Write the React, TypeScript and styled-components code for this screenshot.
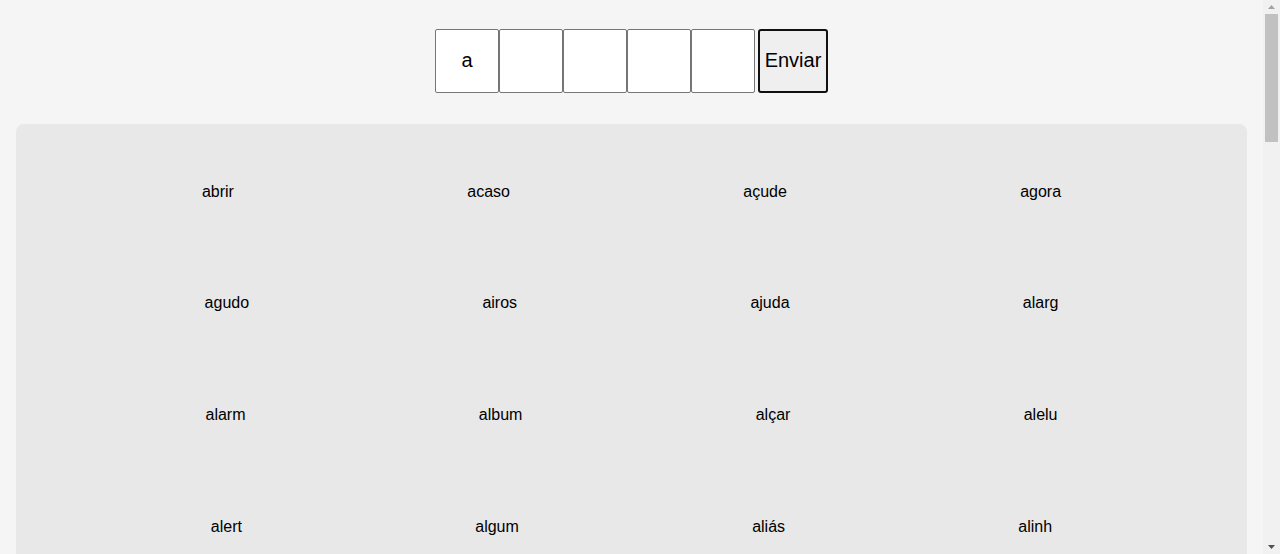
import React, { useState } from "react";
import styled, { createGlobalStyle } from "styled-components";

const GlobalStyle = createGlobalStyle`
  html, body {
    margin: 0;
    padding: 0;
    background: #f5f5f5;
    font-family: "Liberation Sans", Arial, sans-serif;
    color: #000;
    overflow: hidden;
  }
  * { box-sizing: border-box; }
`;

const Shell = styled.div`
  display: flex;
  height: 100vh;
  width: 100%;
`;

const Main = styled.main`
  flex: 1;
  min-width: 0;
  overflow-y: auto;
  scrollbar-width: none;
  &::-webkit-scrollbar { display: none; }
`;

const ScrollBar = styled.div`
  width: 17px;
  flex: none;
  display: flex;
  flex-direction: column;
  background: #f1f1f1;
`;

const ArrowButton = styled.div`
  height: 14px;
  flex: none;
  display: flex;
  justify-content: center;
  align-items: center;
`;

const Track = styled.div`
  flex: 1;
  padding: 0 2px;
`;

const Thumb = styled.div`
  height: 128px;
  background: #c1c1c1;
`;

const Page = styled.div`
  padding: 29px 16px 16px;
`;

const Form = styled.form`
  display: flex;
  justify-content: center;
  align-items: stretch;
  margin: 0 0 31px;
`;

const LetterBox = styled.input`
  width: 64px;
  height: 64px;
  margin: 0;
  padding: 0 0 2px;
  border: 1px solid #767676;
  border-radius: 2px;
  background: #fff;
  text-align: center;
  font-family: "Liberation Sans", Arial, sans-serif;
  font-size: 20px;
  color: #000;
  outline: none;
`;

const SubmitButton = styled.button`
  width: 70px;
  height: 64px;
  margin-left: 3px;
  padding: 0 0 2px;
  border: 2px solid #101010;
  border-radius: 3px;
  background: #efefef;
  font-family: "Liberation Sans", Arial, sans-serif;
  font-size: 20px;
  color: #000;
  cursor: pointer;
`;

const Panel = styled.div`
  background: #e8e8e8;
  border-radius: 8px;
  padding: 12px 16px 11px;
`;

const Row = styled.div`
  display: flex;
  justify-content: center;
  align-items: center;
  gap: 233.3px;
  height: 111.67px;
`;

const Word = styled.span`
  font-size: 16px;
  line-height: 18px;
`;

const WORDS = [
  "abrir", "acaso", "açude", "agora",
  "agudo", "airos", "ajuda", "alarg",
  "alarm", "album", "alçar", "alelu",
  "alert", "algum", "aliás", "alinh",
  "aliso", "almas", "almej", "almoç",
  "alojo", "altar", "altos", "aluno",
  "amado", "amant", "ambos", "ameno",
  "amigo", "amora", "ampla", "anexo",
  "anjos", "antes", "anual", "apelo",
  "apoio", "aquém", "arame", "areia",
  "arena", "armas", "aroma", "arroz",
  "artes", "asilo", "assar", "assim",
  "astro", "atlas", "atrás", "atual",
  "aulas", "autor", "avaro", "aveia",
  "avião", "aviso", "axila", "azedo",
  "azuis", "azula", "azulo", "azuls",
  "babar", "bacia", "baixo", "balde",
  "banco", "banho", "barco", "barro",
];

export default function App() {
  const [letters, setLetters] = useState<string[]>(["a", "", "", "", ""]);

  const rows: string[][] = [];
  for (let i = 0; i < WORDS.length; i += 4) rows.push(WORDS.slice(i, i + 4));

  return (
    <>
      <GlobalStyle />
      <Shell>
        <Main>
          <Page>
            <Form onSubmit={(e) => e.preventDefault()}>
              {letters.map((l, i) => (
                <LetterBox
                  key={i}
                  maxLength={1}
                  value={l}
                  onChange={(e) => {
                    const next = [...letters];
                    next[i] = e.target.value;
                    setLetters(next);
                  }}
                />
              ))}
              <SubmitButton type="submit">Enviar</SubmitButton>
            </Form>
            <Panel>
              {rows.map((r, i) => (
                <Row key={i}>
                  {r.map((w) => (
                    <Word key={w}>{w}</Word>
                  ))}
                </Row>
              ))}
            </Panel>
          </Page>
        </Main>
        <ScrollBar>
          <ArrowButton>
            <svg width="7" height="4" viewBox="0 0 7 4">
              <polygon points="3.5,0 7,4 0,4" fill="#a3a3a3" />
            </svg>
          </ArrowButton>
          <Track>
            <Thumb />
          </Track>
          <ArrowButton>
            <svg width="7" height="4" viewBox="0 0 7 4">
              <polygon points="0,0 7,0 3.5,4" fill="#505050" />
            </svg>
          </ArrowButton>
        </ScrollBar>
      </Shell>
    </>
  );
}
